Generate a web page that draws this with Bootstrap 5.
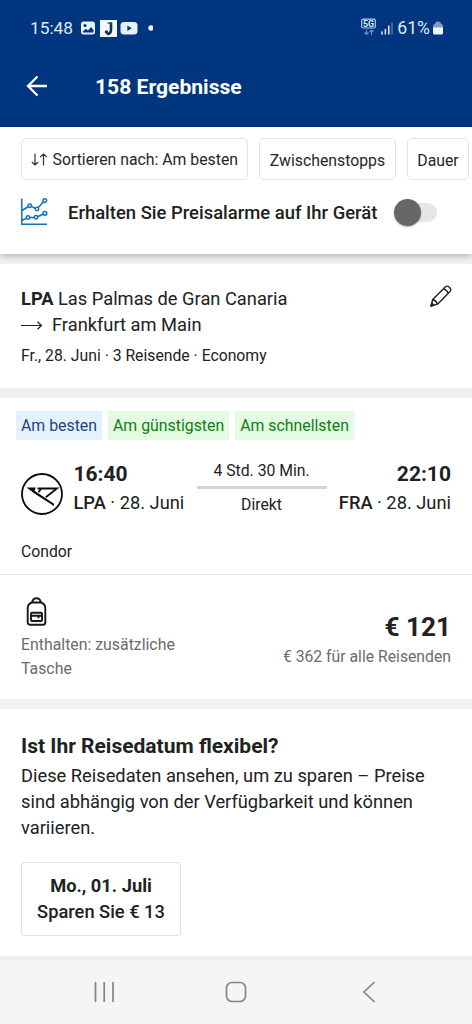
<!DOCTYPE html>
<html lang="de">
<head>
<meta charset="utf-8">
<meta name="viewport" content="width=device-width, initial-scale=1">
<title>158 Ergebnisse</title>
<link href="https://cdn.jsdelivr.net/npm/bootstrap@5.3.0/dist/css/bootstrap.min.css" rel="stylesheet">
<style>
  body { font-family: Roboto, "Liberation Sans", sans-serif; color: #212121; background: #f0f0f0; font-size: 18.3px; line-height: 26.2px; width: 472px; height: 1024px; overflow: hidden; }
  svg { display: block; flex: none; }
  .nowrap, .btn, h1, h2 { white-space: nowrap; }
  .app-head { background: #003580; height: 127px; }
  .status { height: 56px; padding: 0 29px 0 30px; color: #dfeafa; font-size: 17.3px; }
  .title-row { height: 60px; padding-left: 26px; gap: 46px; }
  .title-row h1 { font-size: 21.1px; font-weight: 700; padding-top: 2px; }
  .filters { height: 127px; box-shadow: 0 2px 6px rgba(0,0,0,.25); padding: 11px 0 0 21px; }
  .chip { height: 42px; border: 1px solid #e3e3e3; border-radius: 5px; font-size: 15.8px; padding: 2px 8.5px 0; color: #262626; line-height: 40px; }
  .alert-row { height: 64px; font-weight: 500; font-size: 18.45px; }
  .track { width: 30px; height: 19px; border-radius: 10px; background: #e6e6e6; margin-left: -14px; }
  .knob { width: 27px; height: 27px; border-radius: 50%; background: #666; position: relative; box-shadow: 0 1px 2px rgba(0,0,0,.3); }
  .route { height: 124px; margin-top: 10px; padding: 22px 20px 0 21px; }
  .t12 { font-size: 15.75px; line-height: 24px; }
  .offer { height: 301px; margin-top: 10px; }
  .tags { padding: 13px 0 0 16px; gap: 6px; }
  .tag { height: 29px; line-height: 29.5px; padding: 0 5px; font-size: 15.85px; }
  .best { background: #e4f2fe; color: #1f4287; }
  .good { background: #e3fae3; color: #108010; }
  .leg { padding: 19px 21px 0 21px; height: 100px; }
  .time { font-size: 21px; font-weight: 700; line-height: 31px; }
  .code { font-weight: 500; }
  .bar { width: 130px; height: 3px; background: #d4d4d4; }
  .airline { padding-left: 21px; height: 35px; border-bottom: 1.5px solid #e8e8e8; }
  .price { font-size: 26.2px; font-weight: 700; line-height: 32px; }
  .muted { color: #6b6b6b; font-size: 15.85px; line-height: 23.5px; }
  .flexdate { height: 247px; margin-top: 10px; padding: 24px 21px 0; }
  .flexdate h2 { font-size: 21px; line-height: 27px; font-weight: 700; }
  .datebox { width: 160px; height: 74px; border: 1px solid #e0e0e0; border-radius: 3px; margin-top: 20px; padding-top: 10px; font-weight: 500; }
  .sysnav { height: 63px; margin-top: 5px; background: #f5f5f7; padding: 0 95px 2px 94px; }
</style>
</head>
<body>
<header class="app-head text-white">
  <div class="status d-flex align-items-center">
    <span>15:48</span>
    <svg class="ms-2" width="72" height="18" viewBox="0 0 72 18">
      <rect x="0" y="2.5" width="14" height="13" rx="2.5" fill="#e8f1fc"/><circle cx="4" cy="6.5" r="1.6" fill="#003580"/><path d="M2 13.5v-1.200l3-2.600 2 1.700 3-3.400 2.500 3v2.500z" fill="#003580"/>
      <rect x="19" y="1" width="17" height="17" fill="#f3f7fd"/><path d="M30 3.500v7.500q0 4-4.200 4" fill="none" stroke="#14305c" stroke-width="2.600"/><path d="M26.500 4h4" stroke="#14305c" stroke-width="1.200"/><circle cx="25.500" cy="13" r="1.700" fill="#14305c"/>
      <rect x="39.500" y="3" width="17" height="12.500" rx="3.500" fill="#e8f1fc"/><path d="M46.300 6.500v5.500l4.600-2.750z" fill="#003580"/>
      <circle cx="70" cy="9" r="2.700" fill="#e8f1fc"/>
    </svg>
    <svg class="ms-auto" width="35" height="20" viewBox="0 0 35 20">
      <rect x=".7" y="1.200" width="13.600" height="8.800" rx="1.500" fill="none" stroke="#b9cbe6" stroke-width="1.200"/>
      <text x="7.500" y="8.900" font-size="8.800" font-weight="700" text-anchor="middle" fill="#dfeafa">5G</text>
      <path d="M5.500 11.500V16M3.500 14.500l2 2 2-2M10.500 17v-5M8.500 14l2-2 2 2" fill="none" stroke="#6d8fc0" stroke-width="1.200"/>
      <path d="M21 13.500v3M24.400 11v5.500M27.800 7.500v9" stroke="#e8f1fc" stroke-width="1.500"/><path d="M31 4.500v12" stroke="#5377ae" stroke-width="1.500"/>
    </svg>
    <span class="nowrap" style="margin-left:1.500px;font-size:17.600px">61%</span>
    <svg style="margin-left:3px" width="10" height="14" viewBox="0 0 10 14"><path d="M2 3Q2 .5 5 .5T8 3q2 0 2 2v2H0V5q0-2 2-2z" fill="#7f9cc9"/><path d="M0 6.500h10V12q0 1.500-1.500 1.500h-7Q0 13.500 0 12z" fill="#f0f6ff"/></svg>
  </div>
  <div class="title-row d-flex align-items-center">
    <svg width="23" height="22" viewBox="0 0 23 22"><path d="M21 11H2.500M11.500 1.500L2 11l9.500 9.500" fill="none" stroke="#fff" stroke-width="2.300"/></svg>
    <h1 class="mb-0">158 Ergebnisse</h1>
  </div>
</header>
<main>
  <section class="filters bg-white">
    <div class="d-flex overflow-hidden" style="gap:11px">
      <button class="btn chip d-flex align-items-center flex-shrink-0" style="width:227px;gap:5px">
        <svg width="17" height="14" viewBox="0 0 17 14"><path d="M4 .5v11.500M.8 9L4 12l3.200-3M12.500 12.500V1M9.300 4l3.200-3 3.200 3" fill="none" stroke="#333" stroke-width="1.200"/></svg>
        <span>Sortieren nach: Am besten</span>
      </button>
      <button class="btn chip flex-shrink-0" style="width:137px">Zwischenstopps</button>
      <button class="btn chip flex-shrink-0" style="width:62px">Dauer</button>
    </div>
    <div class="alert-row d-flex align-items-center">
      <svg style="margin-top:-2px" width="27" height="27" viewBox="0 0 27 27" fill="none" stroke="#1272b8" stroke-width="1.500">
        <path d="M.8 .5v25.700H26M1 12.500l6.500-4M10.300 8.300l4.400 2.200M17.300 9.600l5.200-5.800M1 22.500l4.500-2.300M8.500 19.500h5M16.500 18.800l6-2.800"/>
        <circle cx="8.800" cy="7.800" r="1.700"/><circle cx="16" cy="11" r="1.700"/><circle cx="23.700" cy="2.700" r="1.900"/>
        <circle cx="7" cy="19.500" r="1.700"/><circle cx="15" cy="19.300" r="1.700"/><circle cx="23.900" cy="15.300" r="1.900"/>
      </svg>
      <span class="nowrap" style="margin-left:20px;width:326px;padding-top:2px">Erhalten Sie Preisalarme auf Ihr Gerät</span>
      <span class="knob flex-shrink-0"></span><span class="track"></span>
    </div>
  </section>
  <section class="route bg-white d-flex justify-content-between">
    <div>
      <div class="nowrap"><b>LPA</b> Las Palmas de Gran Canaria</div>
      <div class="d-flex align-items-center" style="gap:9px">
        <svg width="22" height="9" viewBox="0 0 22 9"><path d="M0 4.500h20.500M16.500 .7l4 3.800-4 3.800" fill="none" stroke="#222" stroke-width="1.200"/></svg>
        <span>Frankfurt am Main</span>
      </div>
      <div class="t12 nowrap" style="margin-top:6px">Fr., 28. Juni · 3 Reisende · Economy</div>
    </div>
    <svg style="margin-top:-1px" width="22" height="22" viewBox="0 0 22 22" fill="none" stroke="#222" stroke-width="1.400" stroke-linejoin="round"><path d="M1 21l1.700-6.500L15.500 1.800q1.600-1.400 3.500.2l1 1q1.500 1.900 0 3.500L7.500 19.200zM2.700 14.500q3.500 1 4.800 4.700M13.500 3.800q3.500 1 4.700 4.500"/><path d="M1 21l.8-3 2 2.200z" fill="#222"/></svg>
  </section>
  <section class="offer bg-white">
    <div class="tags d-flex"><span class="tag best nowrap">Am besten</span><span class="tag good nowrap">Am günstigsten</span><span class="tag good nowrap">Am schnellsten</span></div>
    <div class="leg d-flex justify-content-between">
      <div class="d-flex" style="gap:10.500px">
        <svg style="margin-top:14px" width="42" height="42" viewBox="0 0 42 42"><circle cx="21" cy="21" r="20" fill="none" stroke="#0a0a0a" stroke-width="1.800"/><path d="M5.500 14.500h9.300l-1.300 3.200 19.500 13.100v2.200L13.500 20.500z" fill="#0a0a0a"/><path d="M16.500 15.500h19.500L24.800 24.200M19.800 16.200l-2.300 3" fill="none" stroke="#0a0a0a" stroke-width="1.800"/></svg>
        <div><div class="time">16:40</div><div class="nowrap"><span class="code">LPA</span> · 28. Juni</div></div>
      </div>
      <div class="t12 text-center nowrap"><div style="height:27px">4 Std. 30 Min.</div><div class="bar"></div><div style="margin-top:4px">Direkt</div></div>
      <div class="text-end"><div class="time">22:10</div><div class="nowrap"><span class="code">FRA</span> · 28. Juni</div></div>
    </div>
    <div class="airline t12">Condor</div>
    <div class="d-flex justify-content-between" style="padding:22px 21px 0">
      <div>
        <svg style="margin-left:5px;margin-bottom:7px" width="21" height="29" viewBox="0 0 21 29" fill="none" stroke="#181818" stroke-width="1.900" stroke-linejoin="round"><path d="M6 5.500Q7 1.300 10.500 1.300T15 5.500Q19.300 7 19.300 11V25.500q0 2.200-2.200 2.200H3.900q-2.200 0-2.200-2.200V11Q1.700 7 6 5.500zM6 5.500h9"/><rect x="5" y="15.800" width="11" height="8.200" rx="1"/><path d="M5 18.800h11M12.500 19v2.200"/></svg>
        <div class="muted nowrap">Enthalten: zusätzliche<br>Tasche</div>
      </div>
      <div class="text-end" style="padding-top:14px"><div class="price">€ 121</div><div class="muted nowrap" style="margin-top:2px;font-size:15.750px">€ 362 für alle Reisenden</div></div>
    </div>
  </section>
  <section class="flexdate bg-white">
    <h2 class="mb-0">Ist Ihr Reisedatum flexibel?</h2>
    <div style="margin-top:3px" class="nowrap">Diese Reisedaten ansehen, um zu sparen – Preise<br>sind abhängig von der Verfügbarkeit und können<br>variieren.</div>
    <div class="datebox text-center nowrap"><b>Mo., 01. Juli</b><br>Sparen Sie € 13</div>
  </section>
</main>
<nav class="sysnav d-flex align-items-center justify-content-between">
  <svg width="21" height="22" viewBox="0 0 21 22"><path d="M1.500 1v20M10.200 1v20M19 1v20" stroke="#858588" stroke-width="1.700"/></svg>
  <svg style="margin-left:-5px" width="22" height="22" viewBox="0 0 22 22"><rect x="1.500" y="1.500" width="19" height="19" rx="5.500" fill="none" stroke="#858588" stroke-width="1.700"/></svg>
  <svg width="15" height="22" viewBox="0 0 15 22"><path d="M12.500 1L2 11l10.500 10" fill="none" stroke="#858588" stroke-width="1.700"/></svg>
</nav>
<script src="https://cdn.jsdelivr.net/npm/bootstrap@5.3.0/dist/js/bootstrap.bundle.min.js"></script>
</body>
</html>
